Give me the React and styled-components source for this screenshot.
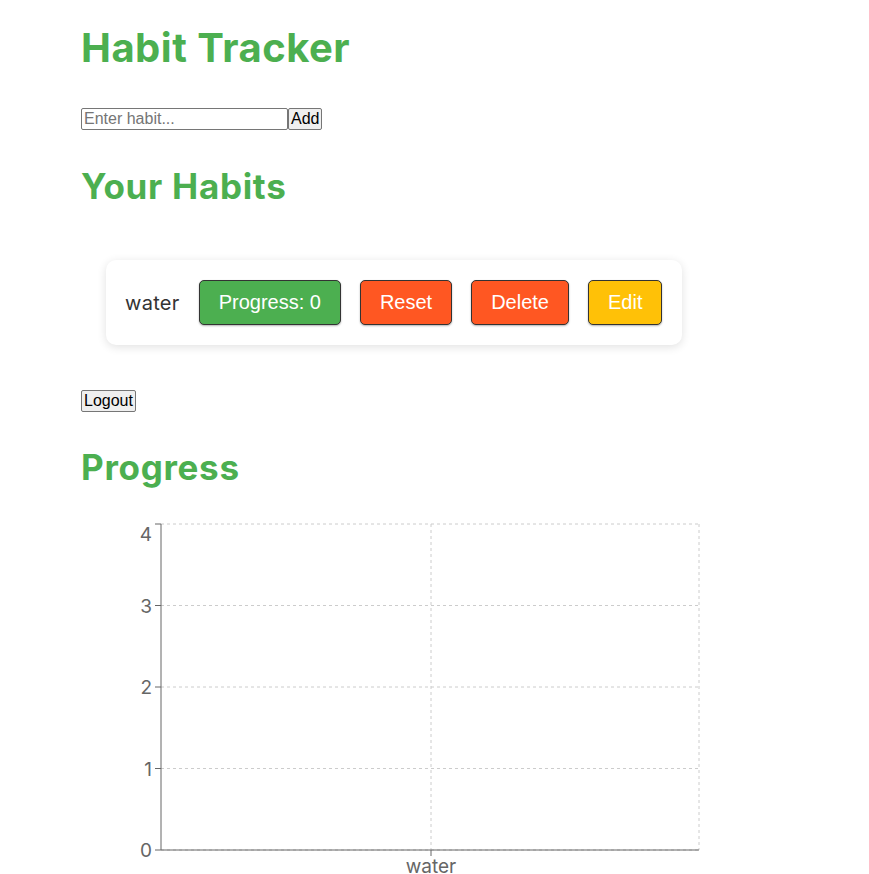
import styled, { createGlobalStyle } from 'styled-components';

const GlobalStyle = createGlobalStyle`
  body {
    margin: 0;
    background: #fff;
    font-family: 'Inter', 'Liberation Sans', sans-serif;
  }
`;

const Page = styled.div`
  padding: 24px 0 0 81px;
`;

const Title = styled.h1`
  margin: 0;
  font-size: 40px;
  line-height: 48px;
  font-weight: 700;
  color: #4caf50;
  letter-spacing: 0.5px;
`;

const SectionTitle = styled.h2`
  margin: ${(p) => p.$top}px 0 0;
  font-size: 35px;
  line-height: 40px;
  font-weight: 700;
  color: #4caf50;
  letter-spacing: 0.7px;
`;

const AddRow = styled.div`
  display: flex;
  margin-top: 36px;
`;

const HabitInput = styled.input`
  box-sizing: border-box;
  width: 207px;
  height: 22px;
  padding: 1px 2px;
  border: 1px solid #767676;
  border-radius: 2px;
  font: 16px 'Liberation Sans', Arial, sans-serif;
  &::placeholder {
    color: #757575;
  }
`;

const PlainButton = styled.button`
  box-sizing: border-box;
  height: 22px;
  padding: 0 2px;
  border: 1px solid #767676;
  border-radius: 2px;
  background: #efefef;
  color: #000;
  font: 16px 'Liberation Sans', Arial, sans-serif;
`;

const Card = styled.div`
  display: inline-flex;
  align-items: center;
  gap: 19px;
  margin: 54px 0 0 25px;
  padding: 20px 20px 20px 19px;
  background: #fff;
  border-radius: 10px;
  box-shadow: 0 2px 10px rgba(0, 0, 0, 0.12);
`;

const HabitName = styled.span`
  font-size: 20px;
  letter-spacing: 0.3px;
  color: #333;
`;

const ActionButton = styled.button`
  box-sizing: border-box;
  height: 45px;
  padding: 0 19px;
  border: 1px solid #333;
  border-radius: 5px;
  background: ${(p) => p.$bg};
  color: #fff;
  font: 20px 'Liberation Sans', Arial, sans-serif;
  box-shadow: 0 1px 2px rgba(0, 0, 0, 0.3);
`;

const LogoutWrap = styled.div`
  margin-top: 45px;
`;

const ChartBox = styled.div`
  margin-top: 27px;
  width: 640px;
`;

const ticks = [4, 3, 2, 1, 0];
const top = 10;
const bottom = 336;
const left = 80;
const right = 618;

const Chart = () => {
  const step = (bottom - top) / 4;
  return (
    <svg width="640" height="370" style={{ display: 'block' }}>
      {ticks.map((t, i) => (
        <line
          key={`h${t}`}
          x1={left}
          x2={right}
          y1={top + i * step}
          y2={top + i * step}
          stroke="#ccc"
          strokeDasharray="3 3"
        />
      ))}
      <line x1={350} x2={350} y1={top} y2={bottom} stroke="#ccc" strokeDasharray="3 3" />
      <line x1={right} x2={right} y1={top} y2={bottom} stroke="#ccc" strokeDasharray="3 3" />
      <line x1={left} x2={left} y1={top} y2={bottom} stroke="#666" />
      <line x1={left} x2={right} y1={bottom} y2={bottom} stroke="#666" />
      {ticks.map((t, i) => (
        <g key={`t${t}`}>
          <line x1={left - 6} x2={left} y1={top + i * step} y2={top + i * step} stroke="#666" />
          <text
            x={left - 9}
            y={top + i * step + (i === 0 ? 17 : 7)}
            textAnchor="end"
            fill="#666"
            fontSize="19"
            fontFamily="Inter, sans-serif"
          >
            {t}
          </text>
        </g>
      ))}
      <line x1={350} x2={350} y1={bottom} y2={bottom + 6} stroke="#666" />
      <text x={350} y={bottom + 23} textAnchor="middle" fill="#666" fontSize="19" fontFamily="Inter, sans-serif">
        water
      </text>
    </svg>
  );
};

const App = () => {
  return (
    <>
      <GlobalStyle />
      <Page>
        <Title>Habit Tracker</Title>
        <AddRow>
          <HabitInput placeholder="Enter habit..." />
          <PlainButton>Add</PlainButton>
        </AddRow>
        <SectionTitle $top={36}>Your Habits</SectionTitle>
        <Card>
          <HabitName>water</HabitName>
          <ActionButton $bg="#4caf50">Progress: 0</ActionButton>
          <ActionButton $bg="#ff5722">Reset</ActionButton>
          <ActionButton $bg="#ff5722">Delete</ActionButton>
          <ActionButton $bg="#ffc107">Edit</ActionButton>
        </Card>
        <LogoutWrap>
          <PlainButton>Logout</PlainButton>
        </LogoutWrap>
        <SectionTitle $top={35}>Progress</SectionTitle>
        <ChartBox>
          <Chart />
        </ChartBox>
      </Page>
    </>
  );
};

export default App;
